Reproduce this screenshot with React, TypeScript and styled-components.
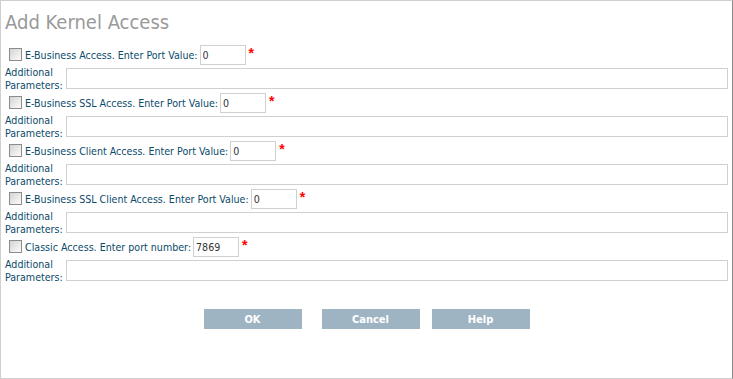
import styled, { createGlobalStyle } from "styled-components";

const GlobalStyle = createGlobalStyle`
  html, body {
    margin: 0;
    padding: 0;
    background: #ffffff;
  }
`;

interface Access {
  label: string
  port: string
}

const accessList: Access[] = [
  { label: "E-Business Access. Enter Port Value:", port: "0" },
  { label: "E-Business SSL Access. Enter Port Value:", port: "0" },
  { label: "E-Business Client Access. Enter Port Value:", port: "0" },
  { label: "E-Business SSL Client Access. Enter Port Value:", port: "0" },
  { label: "Classic Access. Enter port number:", port: "7869" },
];

const labelFont = `"DejaVu Sans Condensed", "Liberation Sans", Arial, sans-serif`;

function App() {
  return (
    <>
      <GlobalStyle />
      <Frame>
        <Title>Add Kernel Access</Title>
        <Form>
          {accessList.map((item) => (
            <div key={item.label}>
              <PortRow>
                <CheckBox type="checkbox" />
                <FieldLabel>{item.label}</FieldLabel>
                <PortInput type="text" defaultValue={item.port} />
                <Required>*</Required>
              </PortRow>
              <ParamRow>
                <ParamLabel>
                  Additional
                  <br />
                  Parameters:
                </ParamLabel>
                <ParamInput type="text" />
              </ParamRow>
            </div>
          ))}
        </Form>
        <ButtonBar>
          <ActionButton $gapRight={20}>OK</ActionButton>
          <ActionButton $gapRight={12}>Cancel</ActionButton>
          <ActionButton>Help</ActionButton>
        </ButtonBar>
      </Frame>
    </>
  );
}

export default App;

const Frame = styled.div`
  width: 733px;
  height: 379px;
  box-sizing: border-box;
  border: 1px solid #cfcfcf;
  border-right-color: #8a8a8a;
  background: #ffffff;
  font-family: ${labelFont};
`;

const Title = styled.h1`
  margin: 0;
  padding: 10px 0 0 4px;
  font-size: 20px;
  line-height: 23px;
  font-weight: normal;
  color: #9a9a9a;
`;

const Form = styled.div`
  margin-top: 10px;
`;

const PortRow = styled.div`
  display: flex;
  align-items: center;
  height: 21px;
  padding-left: 8px;
`;

const CheckBox = styled.input`
  appearance: none;
  margin: 0;
  width: 13px;
  height: 13px;
  box-sizing: border-box;
  border: 1px solid #8c8c8c;
  background: linear-gradient(135deg, #d2d2d2 0%, #ececec 60%, #fbfbfb 100%);
`;

const FieldLabel = styled.span`
  margin-left: 3px;
  font-size: 10.6px;
  color: #0b4a6a;
  white-space: nowrap;
`;

const PortInput = styled.input`
  margin-left: 2px;
  width: 46px;
  height: 20px;
  box-sizing: border-box;
  border: 1px solid #d0d0d0;
  padding: 0 2px;
  font-family: ${labelFont};
  font-size: 10.6px;
  color: #333333;
  outline: none;
`;

const Required = styled.span`
  align-self: flex-start;
  margin: 2px 0 0 3px;
  font-family: "Liberation Sans", Arial, sans-serif;
  font-size: 14px;
  font-weight: bold;
  line-height: 14px;
  color: #ff0000;
`;

const ParamRow = styled.div`
  display: grid;
  grid-template-columns: 61px 1fr;
  height: 27px;
  padding: 0 4px 0 4px;
`;

const ParamLabel = styled.div`
  padding-top: 1px;
  font-size: 10.6px;
  line-height: 12.5px;
  color: #0b4a6a;
`;

const ParamInput = styled.input`
  margin-top: 3px;
  height: 21px;
  box-sizing: border-box;
  border: 1px solid #d0d0d0;
  outline: none;
`;

const ButtonBar = styled.div`
  display: flex;
  justify-content: center;
  margin-top: 25px;
`;

const ActionButton = styled.button<{ $gapRight?: number }>`
  width: 98px;
  height: 20px;
  margin-right: ${(props) => props.$gapRight || 0}px;
  border: none;
  padding: 0;
  background-color: #9eb4c3;
  color: #ffffff;
  font-family: ${labelFont};
  font-size: 11px;
  font-weight: bold;
  cursor: pointer;
`;
